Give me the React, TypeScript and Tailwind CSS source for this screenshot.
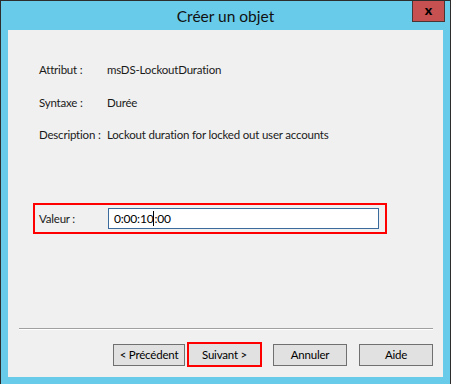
import React from 'react'

const font = { fontFamily: 'Lato, "Noto Sans", Arial, sans-serif' }

function Row({ label, value, className }: { label: string; value: string; className?: string }) {
    return (
        <div className={'flex h-[16px] items-center whitespace-nowrap ' + (className ?? '')}>
            <span className="w-[68px] shrink-0">{label}</span>
            <span>{value}</span>
        </div>
    )
}

function Button({ children, className }: { children: React.ReactNode; className?: string }) {
    return (
        <div
            className={
                'flex h-[22px] items-center justify-center whitespace-nowrap border border-[#707070] bg-[#e1e1e1] text-[#000] ' +
                (className ?? '')
            }
        >
            {children}
        </div>
    )
}

export default function App() {
    return (
        <div
            className="relative flex h-[384px] w-[451px] flex-col border-l border-t border-r border-[#2d2d2d] bg-[#68cbea]"
            style={font}
        >
            {/* title bar */}
            <div className="flex h-[29px] shrink-0 items-center justify-center pt-[2px] text-[15.5px] text-[#111]">
                Créer un objet
            </div>
            <div className="absolute right-[5px] top-0 flex h-[21px] w-[33px] items-center justify-center border border-t-0 border-[#4b3434] bg-[#c75050] pb-[2px] text-[14px] font-black leading-none text-black">
                x
            </div>

            {/* client area */}
            <div className="mx-[7px] flex h-[347px] flex-col bg-[#f0f0f0] text-[11.5px] tracking-[-0.2px] text-[#1a1a1a]">
                <div className="pl-[31px]">
                    <Row label="Attribut :" value="msDS-LockoutDuration" className="mt-[32px]" />
                    <Row label="Syntaxe :" value="Durée" className="mt-[17px]" />
                    <Row label="Description :" value="Lockout duration for locked out user accounts" className="mt-[16px]" />
                </div>

                <div className="ml-[25px] mt-[60px] flex h-[31px] w-[354px] items-center border-2 border-[#ff0000] pl-[4px]">
                    <span className="w-[69px] shrink-0">Valeur :</span>
                    <div className="flex h-[21px] w-[271px] items-center border border-[#3a6b9c] bg-white pl-[5px] text-[12px] text-black">
                        <span>0:00:10</span>
                        <span className="inline-block h-[15px] w-px bg-black" />
                        <span>:00</span>
                    </div>
                </div>

                <div className="flex-1" />

                <div className="ml-[11px] mr-[10px] h-px bg-[#a0a0a0]" />
                <div className="ml-[11px] mr-[10px] h-px bg-white" />

                <div className="mb-[10px] mr-[10px] mt-[12px] flex items-center justify-end">
                    <Button className="w-[72px]">&lt; Précédent</Button>
                    <div className="ml-[2px] flex h-[25px] w-[75px] items-center justify-center border-2 border-[#ff0000]">
                        <div className="flex h-[21px] w-[71px] items-center justify-center bg-[#e1e1e1] text-black">
                            Suivant &gt;
                        </div>
                    </div>
                    <Button className="ml-[11px] w-[74px]">Annuler</Button>
                    <Button className="ml-[12px] w-[74px]">Aide</Button>
                </div>
            </div>
        </div>
    )
}
